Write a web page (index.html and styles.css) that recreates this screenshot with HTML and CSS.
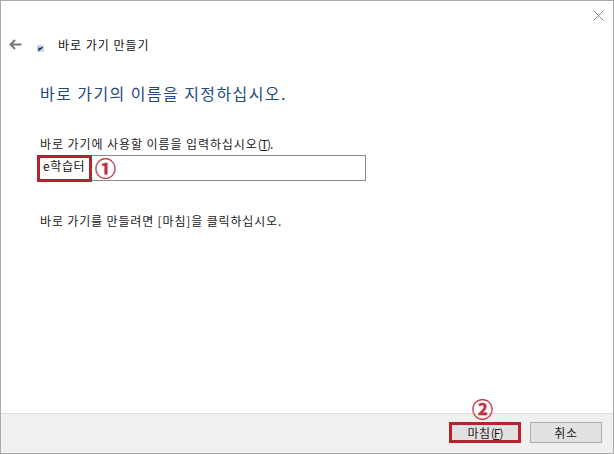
FILE: index.html
```html
<!DOCTYPE html>
<html>
<head>
    <title>바로 가기 만들기</title>
    <link rel="stylesheet" href="styles.css">
</head>
<body>
    <div class="window">
        <div class="title-bar">
            <svg class="close-icon" width="11" height="11" viewBox="0 0 11 11">
                <path d="M0.5 0.5L10.5 10.5M10.5 0.5L0.5 10.5" stroke="#8a8a8a" stroke-width="1" fill="none"/>
            </svg>
        </div>

        <div class="wizard-header">
            <svg class="back-icon" width="13" height="11" viewBox="0 0 13 11">
                <path d="M12.5 5.5H1.5M6 1L1.5 5.5L6 10" stroke="#757575" stroke-width="1.9" fill="none"/>
            </svg>
            <svg class="shortcut-icon" width="7" height="7" viewBox="0 0 7 7">
                <rect width="7" height="7" fill="#cdd6e4"/>
                <path d="M2 6V3.5H4.5M3 4.5L5.5 2" stroke="#1c2f57" stroke-width="1.3" fill="none"/>
            </svg>
            <span class="wizard-title">바로 가기 만들기</span>
        </div>

        <div class="content">
            <h1 class="main-heading">바로 가기의 이름을 지정하십시오.</h1>
            <label class="field-label">바로 가기에 사용할 이름을 입력하십시오<span class="access-key">(<u>T</u>)</span>.</label>
            <div class="name-input">
                <span class="name-value">e학습터</span>
                <span class="callout-box callout-input"></span>
                <span class="step-mark step-one">①</span>
            </div>
            <p class="hint">바로 가기를 만들려면 [마침]을 클릭하십시오.</p>
        </div>

        <div class="footer">
            <span class="step-mark step-two">②</span>
            <button class="btn btn-finish">마침<span class="access-key">(<u>F</u>)</span><span class="callout-box callout-finish"></span></button>
            <button class="btn">취소</button>
        </div>
    </div>
</body>
</html>
```

FILE: styles.css
```css
html, body {
    margin: 0;
    height: 100%;
}

body {
    background: #fff;
    font-family: "Noto Sans CJK KR", "Noto Sans", sans-serif;
    overflow: hidden;
}

.window {
    box-sizing: border-box;
    width: 614px;
    height: 454px;
    display: flex;
    flex-direction: column;
    background: #fff;
    border: 1px solid #a9a9a9;
}

.title-bar {
    height: 27px;
    display: flex;
    justify-content: flex-end;
    align-items: flex-start;
    padding: 9px 9px 0 0;
    box-sizing: border-box;
}

.wizard-header {
    height: 34px;
    display: flex;
    align-items: center;
    box-sizing: border-box;
}

.back-icon {
    margin-left: 8px;
    margin-top: -2px;
}

.shortcut-icon {
    margin-left: 15px;
    margin-top: 6px;
}

.wizard-title {
    margin-left: 14px;
    margin-top: -2px;
    font-size: 12px;
    color: #111;
    letter-spacing: 1px;
}

.content {
    flex: 1;
    padding: 0 0 0 38px;
    position: relative;
}

.main-heading {
    margin: 20px 0 0 1px;
    font-size: 16px;
    line-height: 22px;
    font-weight: 400;
    color: #1f4a82;
    letter-spacing: 1.42px;
}

.field-label {
    display: block;
    margin: 32px 0 0 1px;
    font-size: 12px;
    line-height: 16px;
    color: #222;
    letter-spacing: 0.92px;
}

.access-key {
    letter-spacing: -1px;
}

.name-input {
    box-sizing: border-box;
    position: relative;
    width: 329px;
    height: 26px;
    margin: 3px 0 0 -2px;
    border: 1px solid #8a8a8a;
    background: #fff;
}

.name-value {
    position: absolute;
    left: 5px;
    top: 2px;
    font-size: 12px;
    line-height: 16px;
    color: #111;
    letter-spacing: 0.6px;
}

.callout-box {
    position: absolute;
    box-sizing: border-box;
    border: 3px solid #b8222f;
}

.callout-input {
    left: -1px;
    top: -1px;
    width: 55px;
    height: 27px;
}

.step-mark {
    position: absolute;
    color: #c1303c;
    font-size: 21px;
    line-height: 22px;
    font-weight: 700;
    -webkit-text-stroke: 0.4px #c1303c;
}

.step-one {
    left: 57px;
    top: 0;
}

.hint {
    margin: 32px 0 0 1px;
    font-size: 12px;
    line-height: 16px;
    color: #222;
    letter-spacing: 0.85px;
}

.footer {
    position: relative;
    height: 40px;
    box-sizing: border-box;
    display: flex;
    justify-content: flex-end;
    align-items: flex-start;
    gap: 9px;
    padding: 8px 11px 0 0;
    background: #f0f0f0;
    border-top: 1px solid #dcdcdc;
}

.step-two {
    left: 471px;
    top: -17px;
}

.btn {
    position: relative;
    box-sizing: border-box;
    width: 72px;
    height: 21px;
    padding: 0;
    background: #e1e1e1;
    border: 1px solid #adadad;
    font-family: inherit;
    font-size: 12px;
    letter-spacing: 0.6px;
    color: #222;
    cursor: pointer;
}

.btn-finish {
    outline: 1px dotted #333;
    outline-offset: -2px;
}

.callout-finish {
    left: -1px;
    top: -1px;
    width: 72px;
    height: 21px;
}
```
